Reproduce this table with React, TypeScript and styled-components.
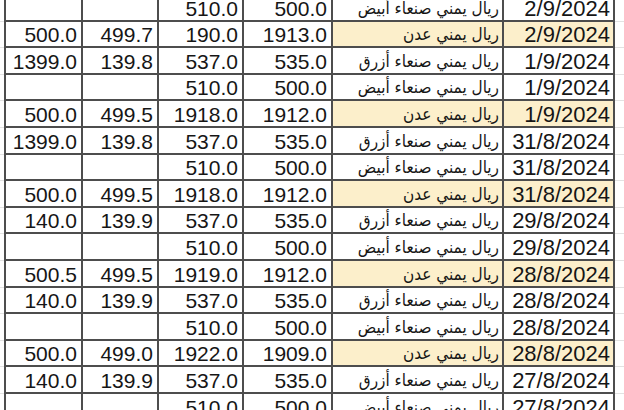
import React from 'react';
import styled, { createGlobalStyle } from 'styled-components';

const GlobalStyle = createGlobalStyle`
  html, body {
    margin: 0;
    padding: 0;
    background: #ffffff;
    overflow: hidden;
  }
  body {
    font-family: "Liberation Sans", "DejaVu Sans", Arial, sans-serif;
    color: #161616;
  }
`;

const colors = {
  line: '#4d4d4d',
  faint: '#e2e2e2',
  tint: '#fcefcb',
  white: '#ffffff',
};

const ROW_H = '26.6px';

const Viewport = styled.div`
  width: 624px;
  height: 410px;
  overflow: hidden;
`;

const Sheet = styled.div`
  display: grid;
  grid-template-columns: 4px 79px 76px 85px 89px 171px 111px 1fr;
  margin-top: -5px;
`;

const Gutter = styled.div`
  height: ${ROW_H};
  box-sizing: border-box;
  border-bottom: 1px solid ${colors.faint};
`;

const Cell = styled.div<{ $tint?: boolean; $first?: boolean; $pad?: number; $size?: number }>`
  height: ${ROW_H};
  box-sizing: border-box;
  border-right: 2px solid ${colors.line};
  border-bottom: 2px solid ${colors.line};
  border-left: ${(p) => (p.$first ? `2px solid ${colors.line}` : 'none')};
  background: ${(p) => (p.$tint ? colors.tint : colors.white)};
  display: flex;
  align-items: flex-end;
  justify-content: flex-end;
  padding: 0 ${(p) => p.$pad ?? 4}px 0 0;
  font-size: ${(p) => p.$size ?? 21}px;
  line-height: 23px;
  white-space: nowrap;
  overflow: hidden;
`;

const ArabicText = styled.span`
  direction: rtl;
  font-family: "DejaVu Sans Condensed", "DejaVu Sans", sans-serif;
  font-size: 17px;
  line-height: 23px;
`;

type Row = {
  a: string;
  b: string;
  c: string;
  d: string;
  name: string;
  date: string;
  aden?: boolean;
};

const ABYAD = 'ريال يمني صنعاء أبيض';
const AZRAQ = 'ريال يمني صنعاء أزرق';
const ADEN = 'ريال يمني عدن';

const rows: Row[] = [
  { a: '', b: '', c: '510.0', d: '500.0', name: ABYAD, date: '2/9/2024' },
  { a: '500.0', b: '499.7', c: '190.0', d: '1913.0', name: ADEN, date: '2/9/2024', aden: true },
  { a: '1399.0', b: '139.8', c: '537.0', d: '535.0', name: AZRAQ, date: '1/9/2024' },
  { a: '', b: '', c: '510.0', d: '500.0', name: ABYAD, date: '1/9/2024' },
  { a: '500.0', b: '499.5', c: '1918.0', d: '1912.0', name: ADEN, date: '1/9/2024', aden: true },
  { a: '1399.0', b: '139.8', c: '537.0', d: '535.0', name: AZRAQ, date: '31/8/2024' },
  { a: '', b: '', c: '510.0', d: '500.0', name: ABYAD, date: '31/8/2024' },
  { a: '500.0', b: '499.5', c: '1918.0', d: '1912.0', name: ADEN, date: '31/8/2024', aden: true },
  { a: '140.0', b: '139.9', c: '537.0', d: '535.0', name: AZRAQ, date: '29/8/2024' },
  { a: '', b: '', c: '510.0', d: '500.0', name: ABYAD, date: '29/8/2024' },
  { a: '500.5', b: '499.5', c: '1919.0', d: '1912.0', name: ADEN, date: '28/8/2024', aden: true },
  { a: '140.0', b: '139.9', c: '537.0', d: '535.0', name: AZRAQ, date: '28/8/2024' },
  { a: '', b: '', c: '510.0', d: '500.0', name: ABYAD, date: '28/8/2024' },
  { a: '500.0', b: '499.0', c: '1922.0', d: '1909.0', name: ADEN, date: '28/8/2024', aden: true },
  { a: '140.0', b: '139.9', c: '537.0', d: '535.0', name: AZRAQ, date: '27/8/2024' },
  { a: '', b: '', c: '510.0', d: '500.0', name: ABYAD, date: '27/8/2024' },
];

export default function App() {
  return (
    <Viewport>
      <GlobalStyle />
      <Sheet>
        {rows.map((r, i) => (
          <React.Fragment key={i}>
            <Gutter />
            <Cell $first>{r.a}</Cell>
            <Cell>{r.b}</Cell>
            <Cell>{r.c}</Cell>
            <Cell>{r.d}</Cell>
            <Cell $tint={r.aden} $pad={3}>
              <ArabicText>{r.name}</ArabicText>
            </Cell>
            <Cell $tint={r.aden} $pad={3} $size={22}>{r.date}</Cell>
            <Gutter />
          </React.Fragment>
        ))}
      </Sheet>
    </Viewport>
  );
}
